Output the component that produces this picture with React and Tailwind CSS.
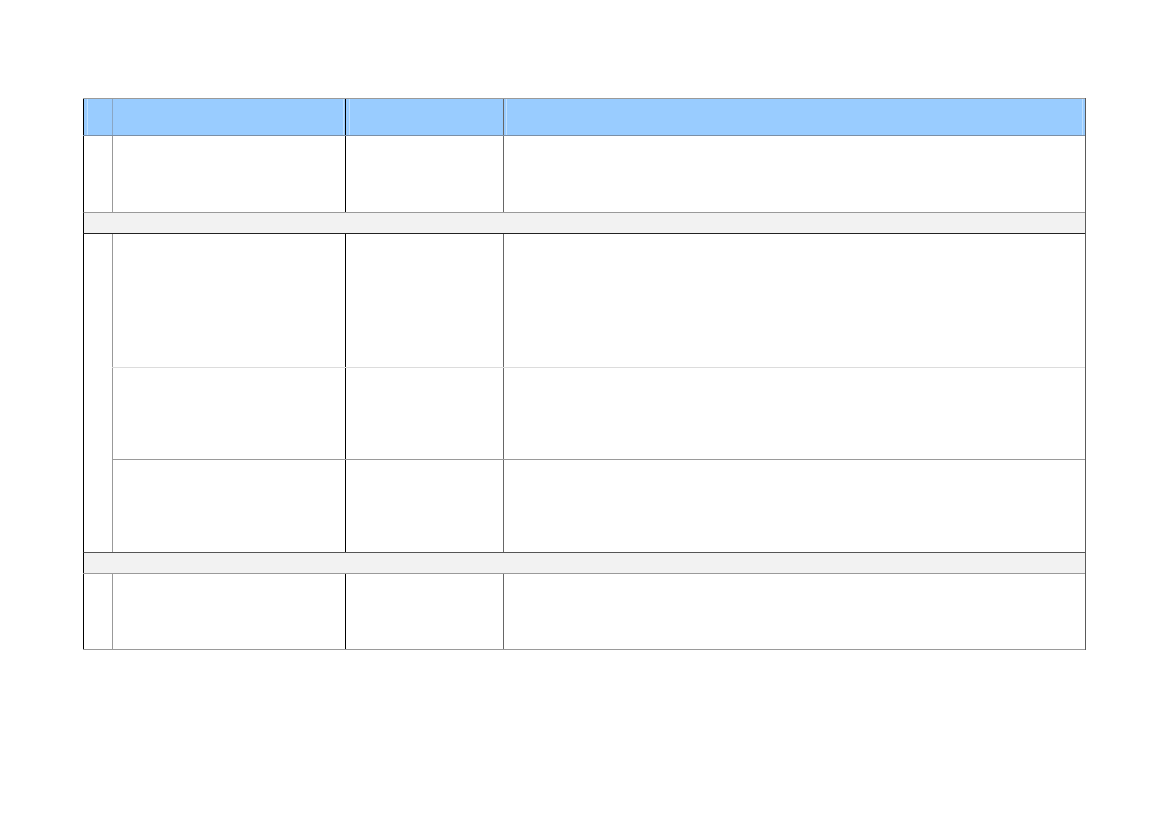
import React from 'react';

const Cells = ({ h, top }) => (
    <div className={`flex ${top}`}>
        <div className={`w-[233px] border-l border-[#999] ${h}`}></div>
        <div className={`w-[158px] border-l border-l-black ${h}`}></div>
        <div className={`w-[582px] border-l border-l-[#666] ${h}`}></div>
    </div>
);

const App = () => {

    return (
        <div className="min-h-[826px] bg-white pt-[98px] pl-[83px]">
            <div className="w-[1003px] border-r border-r-[#5a5a5a] flex flex-col">

                {/* header */}
                <div className="flex h-[37px] bg-[#99ccff] border-t border-t-[#9a9a9a]">
                    <div className="w-[29px] border-l border-l-black pl-[3px]">
                        <div className="h-full w-px bg-[#bfe0ff]"></div>
                    </div>
                    <div className="w-[233px] border-l border-l-[#8aa6c4] flex justify-end pr-[1px]">
                        <div className="h-full w-px bg-[#bfe0ff]"></div>
                    </div>
                    <div className="w-[158px] border-l border-l-black pl-[3px]">
                        <div className="h-full w-px bg-[#bfe0ff]"></div>
                    </div>
                    <div className="w-[582px] border-l border-l-[#666] flex justify-between px-[2px]">
                        <div className="h-full w-px bg-[#bfe0ff]"></div>
                        <div className="h-full w-px bg-[#bfe0ff]"></div>
                    </div>
                </div>

                {/* row 1 */}
                <div className="flex border-t border-t-[#7b8fa6]">
                    <div className="w-[29px] h-[76px] border-l border-l-black"></div>
                    <Cells h="h-[76px]" top="" />
                </div>

                {/* band */}
                <div className="h-[21px] bg-[#f2f2f2] border-t border-t-[#9a9a9a] border-l border-l-black"></div>

                {/* grouped rows */}
                <div className="flex border-t border-t-[#222]">
                    <div className="w-[29px] border-l border-l-black"></div>
                    <div className="flex flex-col">
                        <Cells h="h-[133px]" top="" />
                        <Cells h="h-[91px]" top="border-t border-t-[#dcdcdc]" />
                        <Cells h="h-[92px]" top="border-t border-t-[#9a9a9a]" />
                    </div>
                </div>

                {/* band */}
                <div className="h-[21px] bg-[#f2f2f2] border-t border-t-[#555] border-l border-l-black"></div>

                {/* last row */}
                <div className="flex border-t border-b border-t-[#9a9a9a] border-b-[#9a9a9a]">
                    <div className="w-[29px] h-[75px] border-l border-l-black"></div>
                    <Cells h="h-[75px]" top="" />
                </div>

            </div>
        </div>
    );
}

export default App;
